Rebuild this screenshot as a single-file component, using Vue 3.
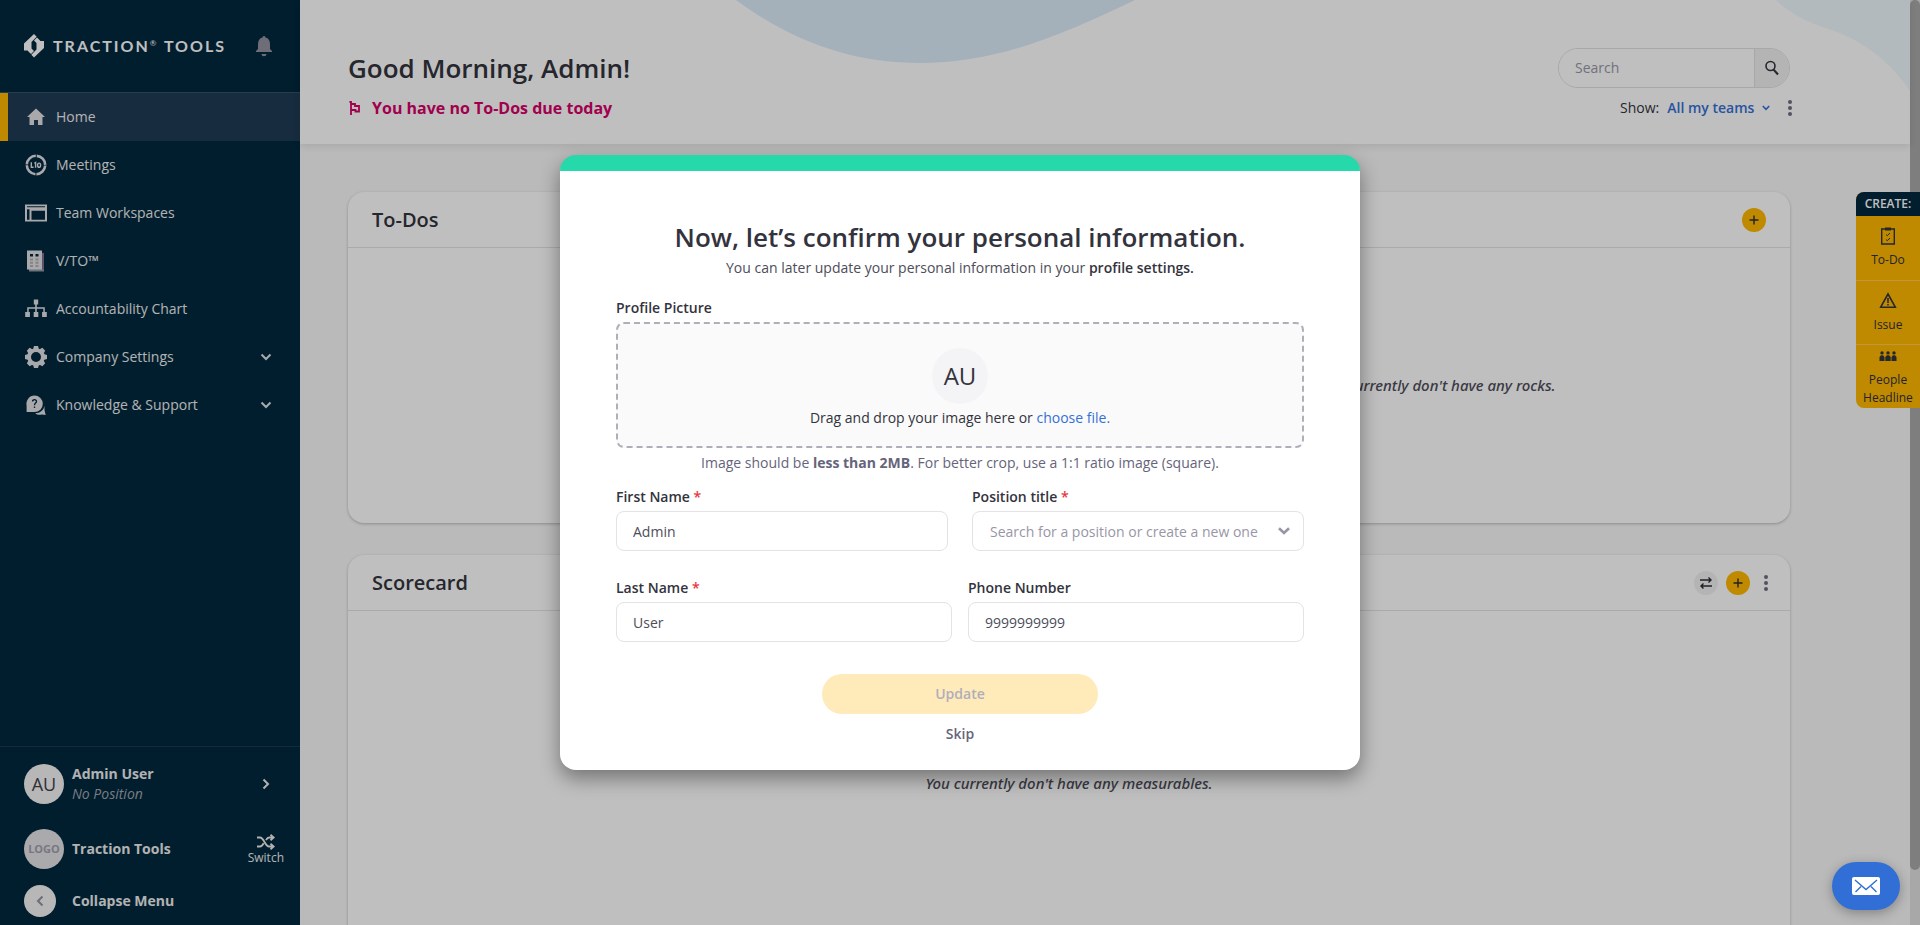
<script setup>
import { ref } from 'vue'

const navItems = [
  { label: 'Home', icon: 'home', active: true },
  { label: 'Meetings', icon: 'meetings' },
  { label: 'Team Workspaces', icon: 'workspaces' },
  { label: 'V/TO™', icon: 'vto' },
  { label: 'Accountability Chart', icon: 'chart' },
  { label: 'Company Settings', icon: 'gear', expandable: true },
  { label: 'Knowledge & Support', icon: 'support', expandable: true }
]

const teeth = [0, 45, 90, 135, 180, 225, 270, 315]

const firstName = ref('Admin')
const lastName = ref('User')
const phone = ref('9999999999')
const position = ref('')
const search = ref('')
</script>

<template>
  <div class="app">
    <aside class="sidebar">
      <div class="brand">
        <svg class="brand-mark" viewBox="0 0 20 24" aria-hidden="true">
          <path fill="#fff" d="M10 0 12.700 2.800 7.500 8v6.500L10 17 7 20 3.500 16.500H0V9.500Z" />
          <path fill="#fff" d="M10 23.500 7.300 20.700 12.500 15.500V9L10 6.500 13 3.500 16.500 7H20V14Z" />
        </svg>
        <span class="brand-name">TRACTION<sup>®</sup> TOOLS</span>
        <button class="plain bell" aria-label="Notifications">
          <svg width="18" height="22" viewBox="0 0 18 22"><path fill="#95929f" d="M9 1a1.500 1.500 0 0 1 1.500 1.600C13.500 3.300 15 5.800 15 9v5l2 2v1H1v-1l2-2V9c0-3.200 1.500-5.700 4.500-6.400A1.500 1.500 0 0 1 9 1Zm-2.500 18h5a2.500 2.200 0 0 1-5 0Z" /></svg>
        </button>
      </div>

      <nav class="nav">
        <a v-for="item in navItems" :key="item.label" href="#" class="nav-item" :class="{ active: item.active }">
          <svg class="nav-icon" viewBox="0 0 22 22" fill="#e2e2e5" aria-hidden="true">
            <path v-if="item.icon === 'home'" d="M11 2.500 20 11h-2.500v8H13v-5H9v5H4.500v-8H2Z" />
            <template v-else-if="item.icon === 'meetings'">
              <circle cx="11" cy="11" r="9.200" fill="none" stroke="#e2e2e5" stroke-width="2.600" stroke-dasharray="13.450 1" stroke-dashoffset="-0.500" />
              <path fill="none" stroke="#e2e2e5" stroke-width="1.400" d="M6.300 8.300v4.900h2.300M10.600 13.800V8.600l-1.200.8" />
              <ellipse cx="14.100" cy="11.200" rx="1.500" ry="2.100" fill="none" stroke="#e2e2e5" stroke-width="1.400" />
            </template>
            <path v-else-if="item.icon === 'workspaces'" fill-rule="evenodd" d="M0 2.500h22v17H0ZM2 4.300v1h18v-1ZM2 7.300V17.700h2.500V7.300Zm4.500 1.500v8.900H20V8.800Z" />
            <template v-else-if="item.icon === 'vto'">
              <path fill="#8f9aa6" d="M4 3h15v18.500H4Z" />
              <path stroke="#6d3f78" d="M18 2.500v17" />
              <path d="M2 .5h15v19H2Z" />
              <path fill="#00283e" d="M5 4h3v2.500H5zM10.500 4h3v2.500h-3z" />
              <path fill="#b0b0b6" d="M5 8.500h3v2H5zM10.500 8.500h3v2h-3zM5 11.800h3v2H5zM10.500 11.800h3v2h-3zM5 15h3v2H5zM10.500 15h3v2h-3z" />
            </template>
            <path v-else-if="item.icon === 'chart'" d="M8.800 1.500h4.400v5h-1.400v2.700h8v4.800h2v5h-4.700v-5h1.200v-3.300h-6.500v3.300h1.500v5H8.700v-5h1.500v-3.300H3.700v3.300h1.200v5H.2v-5h2V9.200h8V6.500H8.800Z" />
            <template v-else-if="item.icon === 'gear'">
              <circle cx="11" cy="11" r="6.900" fill="none" stroke="#e2e2e5" stroke-width="3.800" />
              <path v-for="a in teeth" :key="a" d="M8 3.500 9 0h4l1 3.500Z" :transform="`rotate(${a} 11 11)`" />
            </template>
            <template v-else>
              <path d="M9.500 1.500a8.300 8.300 0 0 1 0 16.600H1.600v-6.500A8.300 8.300 0 0 1 9.500 1.500Z" />
              <path d="M19.500 11.500v4.800l1.200 4.700-3.700-.5c-3 .8-5 .2-6.800-1.300 5 0 8.600-3 9.300-7.700Z" />
              <path fill="none" stroke="#00283e" stroke-width="1.300" d="M7.500 7.600c0-2.700 4.200-2.400 4 0-.2 1.600-2 1.500-2 3.600M9.500 12.500v1.500" />
            </template>
          </svg>
          <span>{{ item.label }}</span>
          <svg v-if="item.expandable" class="nav-caret" viewBox="0 0 12 8" aria-hidden="true"><path fill="none" stroke="#e2e2e5" stroke-width="2" d="m1.500 1.500 4.500 4.500 4.500-4.500" /></svg>
        </a>
      </nav>

      <div class="side-foot">
        <a class="foot-row" href="#">
          <span class="avatar">AU</span>
          <span class="who"><b>Admin User</b><i>No Position</i></span>
          <svg class="foot-caret" viewBox="0 0 8 12" aria-hidden="true"><path fill="none" stroke="#eee" stroke-width="2" d="m1.500 1.500 4.500 4.500-4.500 4.500" /></svg>
        </a>
        <div class="foot-row org">
          <span class="avatar logo">LOGO</span>
          <b>Traction Tools</b>
          <button class="plain switch">
            <svg width="18" height="16" viewBox="0 0 18 16" aria-hidden="true"><path fill="none" stroke="#eee" stroke-width="1.800" d="M0 3.500h3c4 0 5 9 9 9h4M0 12.500h3c1.700 0 2.700-1.400 3.700-3.200M9 6.200c.8-1.600 1.700-2.700 3.300-2.700H16M13.500.7l3.200 2.800-3.200 2.800M13.500 9.700l3.200 2.800-3.200 2.800" /></svg>
            <span>Switch</span>
          </button>
        </div>
        <button class="plain foot-row collapse">
          <span class="round"><svg width="8" height="12" viewBox="0 0 8 12" aria-hidden="true"><path fill="none" stroke="#92929e" stroke-width="2" d="M6.500 1.500 2 6l4.500 4.500" /></svg></span>
          <b>Collapse Menu</b>
        </button>
      </div>
    </aside>

    <main class="main">
      <header class="top">
        <svg class="blob" width="410" height="64" viewBox="0 0 410 64" aria-hidden="true"><path fill="#dcecf8" d="M0 0C60 44 120 63 183 63 258 63 320 38 399 0Z" /></svg>
        <svg class="blob right" width="134" height="92" viewBox="0 0 134 92" aria-hidden="true"><path fill="#eff8fc" d="M0 0C14 14 34 23 52 29 88 40 116 64 134 91V0Z" /></svg>
        <div class="greeting">
          <h1>Good Morning, Admin!</h1>
          <p class="due">
            <svg width="12" height="16" viewBox="0 0 12 16" aria-hidden="true"><path fill="none" stroke="#d80068" stroke-width="1.800" d="M3 1v14M1.500 2H3M3 4h4v2h4v5.500H7.500V10H3" /></svg>
            You have no To-Dos due today
          </p>
        </div>
        <div class="tools">
          <div class="search">
            <input v-model="search" type="text" placeholder="Search" aria-label="Search">
            <button class="plain" aria-label="Run search"><svg width="14" height="16" viewBox="0 0 14 16"><circle cx="5.500" cy="6" r="4.500" fill="none" stroke="#33333d" stroke-width="1.600" /><path stroke="#33333d" stroke-width="2" d="m8.500 9.500 4.500 5" /></svg></button>
          </div>
          <div class="show">
            <span>Show:</span>
            <button class="plain teams">All my teams <svg width="8" height="6" viewBox="0 0 8 6" aria-hidden="true"><path fill="none" stroke="#3470d6" stroke-width="1.600" d="m.8 1 3.200 3.300L7.200 1" /></svg></button>
            <button class="plain dots" aria-label="More options"><i></i><i></i><i></i></button>
          </div>
        </div>
      </header>

      <div class="cards">
        <section class="card">
          <div class="card-head"><h2>To-Dos</h2></div>
          <div class="card-body"></div>
        </section>
        <section class="card">
          <div class="card-head">
            <button class="plain round-btn add" aria-label="Add rock"><svg width="10" height="10" viewBox="0 0 10 10"><path stroke="#2b2b35" stroke-width="1.400" d="M5 .5v9M.5 5h9" /></svg></button>
          </div>
          <div class="card-body"><p>You currently don't have any rocks.</p></div>
        </section>
        <section class="card wide">
          <div class="card-head">
            <h2>Scorecard</h2>
            <button class="plain round-btn swap" aria-label="Transpose"><svg width="12" height="12" viewBox="0 0 12 12"><path fill="none" stroke="#2b2b35" stroke-width="1.400" d="M0 3h11M8.500.5 11 3 8.500 5.500M12 9H1M3.500 6.500 1 9l2.500 2.500" /></svg></button>
            <button class="plain round-btn add" aria-label="Add measurable"><svg width="10" height="10" viewBox="0 0 10 10"><path stroke="#2b2b35" stroke-width="1.400" d="M5 .5v9M.5 5h9" /></svg></button>
            <button class="plain dots" aria-label="Scorecard options"><i></i><i></i><i></i></button>
          </div>
          <div class="card-body"><p>You currently don't have any measurables.</p></div>
        </section>
      </div>
    </main>
    <div class="scrollbar"><div class="thumb"></div></div>

    <div class="create">
      <strong>CREATE:</strong>
      <button class="plain">
        <svg width="16" height="18" viewBox="0 0 16 18" aria-hidden="true"><path fill="none" stroke="#33333d" stroke-width="1.400" d="M1.700 2h12.600v15H1.700z" /><path fill="#33333d" d="M5 .5h6v3H5z" /><path fill="none" stroke="#33333d" d="m6 7.500 1.300 1.200L10 6M6 12.500l1.300 1.200L10 11" /></svg>
        To-Do
      </button>
      <button class="plain">
        <svg width="18" height="18" viewBox="0 0 18 18" aria-hidden="true"><path fill="none" stroke="#33333d" stroke-width="1.600" d="M9 2 16.300 15.200H1.700ZM9 6v5M9 12v1.600" /></svg>
        Issue
      </button>
      <button class="plain">
        <svg width="18" height="18" viewBox="0 -4 18 18" aria-hidden="true"><path fill="#33333d" d="M.5 10V6L2 4.300h2L5.500 6v4ZM6.300 10V6l1.500-1.700h2.400L11.700 6v4ZM12.500 10V6L14 4.300h2L17.500 6v4Z" /><circle cx="3" cy="1.900" r="1.700" fill="#33333d" /><circle cx="9" cy="1.900" r="1.700" fill="#33333d" /><circle cx="15" cy="1.900" r="1.700" fill="#33333d" /></svg>
        People Headline
      </button>
    </div>

    <div class="backdrop">
      <form class="modal" role="dialog" aria-labelledby="dialog-title" @submit.prevent>
        <h2 id="dialog-title">Now, let’s confirm your personal information.</h2>
        <p class="sub">You can later update your personal information in your <b>profile settings.</b></p>
        <span class="label">Profile Picture</span>
        <div class="drop">
          <span class="big-avatar">AU</span>
          <p>Drag and drop your image here or <a href="#">choose file.</a></p>
        </div>
        <p class="hint">Image should be <b>less than 2MB</b>. For better crop, use a 1:1 ratio image (square).</p>
        <div class="fields">
          <div class="field">
            <label for="first">First Name <em>*</em></label>
            <input id="first" v-model="firstName" type="text">
          </div>
          <div class="field">
            <label for="position">Position title <em>*</em></label>
            <div class="combo">
              <input id="position" v-model="position" type="text" placeholder="Search for a position or create a new one">
              <button type="button" class="plain" aria-label="Show positions"><svg width="12" height="8" viewBox="0 0 12 8"><path fill="none" stroke="#9896a6" stroke-width="2.600" d="M1 1.200 6 6l5-4.800" /></svg></button>
            </div>
          </div>
        </div>
        <div class="fields tight">
          <div class="field">
            <label for="last">Last Name <em>*</em></label>
            <input id="last" v-model="lastName" type="text">
          </div>
          <div class="field">
            <label for="phone">Phone Number</label>
            <input id="phone" v-model="phone" type="tel">
          </div>
        </div>
        <button type="submit" class="plain update" disabled>Update</button>
        <button type="button" class="plain skip">Skip</button>
      </form>
    </div>

    <button class="plain chat" aria-label="Messages">
      <svg width="28" height="18" viewBox="0 0 28 18"><rect width="28" height="18" rx="2" fill="#fff" /><path fill="none" stroke="#316fd6" stroke-width="1.400" d="m3 3 11 9.500L25 3M3.500 15 9 9.500M24.500 15 19 9.500" /></svg>
    </button>
  </div>
</template>

<style>
body { margin: 0; }
</style>

<style scoped>
* { box-sizing: border-box; }
.app {
  position: relative;
  display: flex;
  height: 100vh;
  overflow: hidden;
  background: #f8f8f8;
  color: #33333d;
  font: 14px/20px "Open Sans", "Noto Sans", sans-serif;
}
h1, h2, p { margin: 0; }
h1, h2 { font-weight: 600; }
a { text-decoration: none; }
b { font-weight: 700; }
.plain {
  padding: 0;
  border: 0;
  background: none;
  color: inherit;
  font: inherit;
  cursor: pointer;
}
svg { flex: none; }

.sidebar {
  display: flex;
  flex: none;
  flex-direction: column;
  width: 300px;
  background: #00283e;
  color: #eee;
}
.brand {
  display: flex;
  align-items: center;
  height: 93px;
  padding: 0 27px 0 24px;
  border-bottom: 1px solid #33506a;
}
.brand-mark { width: 20px; height: 24px; }
.brand-name {
  margin-left: 9px;
  color: #fff;
  font: 700 16px/20px Lato, sans-serif;
  letter-spacing: 2px;
  white-space: nowrap;
}
.brand-name sup { font-size: 8px; font-weight: 400; line-height: 0; }
.bell { display: flex; margin-left: auto; }
.nav-item {
  display: flex;
  align-items: center;
  height: 48px;
  padding: 0 28px 0 25px;
  color: #eee;
}
.nav-item.active {
  padding-left: 17px;
  border-left: 8px solid #ffb800;
  background: #203b54;
}
.nav-icon { width: 22px; height: 22px; margin-right: 9px; }
.nav-caret { width: 12px; height: 8px; margin-left: auto; }
.side-foot {
  display: flex;
  flex-direction: column;
  margin-top: auto;
  padding: 17px 0 8px;
  border-top: 1px solid #1d3650;
}
.foot-row {
  display: flex;
  align-items: center;
  padding: 0 30px 0 24px;
  color: #eee;
}
.avatar {
  display: flex;
  flex: none;
  align-items: center;
  justify-content: center;
  width: 40px;
  height: 40px;
  margin-right: 8px;
  border-radius: 50%;
  background: #f4f4f6;
  color: #40404a;
  font-size: 18px;
}
.avatar.logo { background: #e3e3e6; color: #a09eae; font-size: 11px; font-weight: 700; }
.who { display: flex; flex-direction: column; }
.who i { color: #a3a6ae; }
.foot-caret { width: 8px; height: 12px; margin-left: auto; }
.org { margin-top: 25px; padding-right: 16px; }
.switch {
  display: flex;
  flex-direction: column;
  align-items: center;
  gap: 1px;
  margin-left: auto;
  font-size: 12px;
  line-height: 14px;
}
.collapse { margin-top: 16px; text-align: left; }
.round {
  display: flex;
  align-items: center;
  justify-content: center;
  width: 32px;
  height: 32px;
  margin-right: 16px;
  border-radius: 50%;
  background: #f4f4f6;
}

.main { flex: 1; min-width: 0; }
.top {
  position: relative;
  display: flex;
  justify-content: space-between;
  height: 144px;
  padding: 48px 120px 0 48px;
  background: #fff;
  box-shadow: 0 2px 8px rgba(0, 0, 0, .1);
}
.blob { position: absolute; top: 0; left: 436px; }
.blob.right { right: 0; left: auto; }
.greeting, .tools { position: relative; }
h1 { font-size: 26px; line-height: 40px; }
.due {
  display: flex;
  align-items: center;
  gap: 12px;
  color: #d80068;
  font-size: 16px;
  font-weight: 700;
  line-height: 40px;
}
.search {
  display: flex;
  width: 232px;
  height: 40px;
  overflow: hidden;
  border: 1px solid #e0e0e2;
  border-radius: 20px;
}
input { font: inherit; }
.search input {
  flex: 1;
  min-width: 0;
  padding: 0 16px;
  border: 0;
  background: #fff;
}
input::placeholder { color: #9896a6; opacity: 1; }
.search button {
  display: flex;
  align-items: center;
  justify-content: center;
  width: 35px;
  border-left: 1px solid #e0e0e2;
  background: #f1f1f1;
}
.show {
  display: flex;
  align-items: center;
  justify-content: flex-end;
  height: 40px;
  margin-right: -2px;
}
.teams { margin-left: 8px; color: #3470d6; font-weight: 600; }
.teams svg { margin: 0 18px 2px 4px; }
.dots { display: flex; flex-direction: column; gap: 2px; width: 4px; }
.dots i { width: 4px; height: 4px; border-radius: 50%; background: #706e80; }

.cards {
  display: grid;
  grid-template-columns: 1fr 1fr;
  gap: 32px;
  padding: 48px 120px 0 48px;
}
.card {
  height: 331px;
  border-radius: 16px;
  background: #fff;
  box-shadow: 0 1px 3px rgba(0, 0, 0, .25);
}
.card.wide { grid-column: 1 / -1; height: 420px; }
.card-head {
  display: flex;
  align-items: center;
  justify-content: flex-end;
  gap: 8px;
  height: 56px;
  padding: 0 24px;
  border-bottom: 1px solid #e3e3e3;
}
.card.wide .card-head { padding-right: 22px; }
.card-head h2 { margin-right: auto; font-size: 20px; line-height: 28px; }
.card-body {
  padding-top: 127px;
  color: #4d4d5a;
  font: italic 500 15px/20px "Noto Sans", "Open Sans", sans-serif;
  text-align: center;
}
.card.wide .card-body { padding-top: 162px; }
.round-btn {
  display: flex;
  align-items: center;
  justify-content: center;
  width: 24px;
  height: 24px;
  border-radius: 50%;
}
.add { background: #ffb800; }
.swap { background: #f1f1f1; }
.card-head .dots { margin-left: 6px; }

.scrollbar { width: 10px; background: #e0e0e0; }
.thumb { height: 94%; border-radius: 5px; background: #a9a9a9; }

.create {
  position: absolute;
  top: 192px;
  right: 0;
  display: flex;
  flex-direction: column;
  width: 64px;
  overflow: hidden;
  border-radius: 8px 0 0 8px;
  background: #ffb800;
  color: #2f2f3a;
  font-size: 12px;
  line-height: 18px;
  text-align: center;
}
.create strong { background: #00283e; color: #fff; font-weight: 600; line-height: 24px; }
.create button {
  display: flex;
  flex-direction: column;
  align-items: center;
  justify-content: center;
  gap: 6px;
  height: 64px;
}
.create button + button { border-top: 1px solid #ffcb4a; }

.backdrop {
  position: absolute;
  inset: 0;
  display: flex;
  align-items: center;
  justify-content: center;
  background: rgba(0, 0, 0, .25);
}
.modal {
  display: flex;
  flex-direction: column;
  width: 800px;
  padding: 46px 56px 26px;
  border-top: 16px solid #26d9aa;
  border-radius: 16px;
  background: #fff;
  box-shadow: 0 8px 20px rgba(0, 0, 0, .4);
}
.modal h2 { font-size: 26px; line-height: 40px; text-align: center; }
.sub { color: #4d4d5a; line-height: 22px; text-align: center; }
.sub b { color: #33333d; font-weight: 600; }
.label, label { font-weight: 600; line-height: 20px; }
.label { margin-top: 19px; }
.drop {
  display: flex;
  flex-direction: column;
  align-items: center;
  margin-top: 4px;
  padding: 24px 0 18px;
  border: 2px dashed #b0aebb;
  border-radius: 8px;
  background: #fafafa;
}
.big-avatar {
  width: 56px;
  height: 56px;
  border-radius: 50%;
  background: #f4f4f6;
  font-size: 24px;
  line-height: 56px;
  text-align: center;
}
.drop p { margin-top: 4px; }
.drop a { color: #3470d6; }
.hint { margin-top: 5px; color: #66647a; text-align: center; }
.fields { display: flex; gap: 24px; margin-top: 14px; }
.fields.tight { gap: 16px; margin-top: 27px; }
.field { display: flex; flex: 1; flex-direction: column; gap: 4px; min-width: 0; }
.field em { color: #e8363c; font-style: normal; }
.field input {
  width: 100%;
  height: 40px;
  padding: 0 16px;
  border: 1px solid #e3e3e6;
  border-radius: 8px;
  background: #fff;
  color: #4d4d5a;
}
.combo { position: relative; display: flex; }
.combo input { padding-right: 40px; padding-left: 17px; }
.combo button { position: absolute; top: 0; right: 14px; bottom: 0; display: flex; align-items: center; }
.update {
  align-self: center;
  width: 276px;
  height: 40px;
  margin-top: 32px;
  border-radius: 20px;
  background: #ffeab9;
  color: #b0aebb;
  font-weight: 600;
}
.skip { align-self: center; margin-top: 10px; color: #66647a; font-weight: 600; }

.chat {
  position: absolute;
  right: 20px;
  bottom: 15px;
  display: flex;
  align-items: center;
  justify-content: center;
  width: 68px;
  height: 48px;
  border-radius: 24px;
  background: #316fd6;
  box-shadow: 0 3px 12px rgba(0, 0, 0, .3);
}
</style>
